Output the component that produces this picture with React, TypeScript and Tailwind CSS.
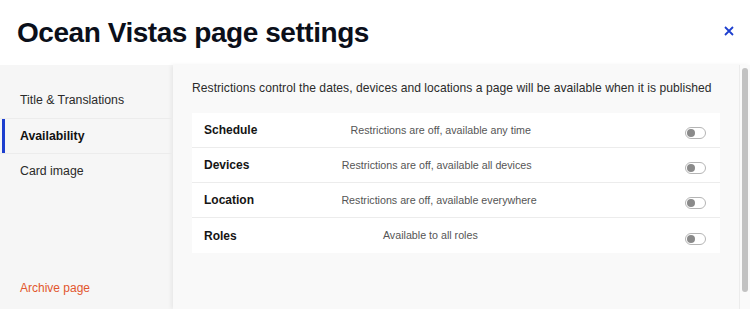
import React from 'react';

const rows = [
  { label: 'Schedule', desc: 'Restrictions are off, available any time' },
  { label: 'Devices', desc: 'Restrictions are off, available all devices' },
  { label: 'Location', desc: 'Restrictions are off, available everywhere' },
  { label: 'Roles', desc: 'Available to all roles' },
];

const Toggle: React.FC = () => (
  <div className="w-[21px] h-[12px] rounded-full border border-[#b5b5b5] bg-white flex items-center px-[1px] mt-[6px]">
    <div className="w-[8px] h-[8px] rounded-full bg-[#8a8a8a]"></div>
  </div>
);

const App: React.FC = () => {
  return (
    <div className="w-[750px] h-[309px] flex flex-col bg-white overflow-hidden font-['Liberation_Sans',Arial,sans-serif] text-[#1a1a1a]">
      {/* Header */}
      <div className="h-[65px] flex items-center justify-between pl-[17px] pr-[15px] shrink-0">
        <h1 className="text-[28px] font-bold tracking-[-0.45px] text-[#0b0f1a] leading-none mt-[1px]">
          Ocean Vistas page settings
        </h1>
        <button className="text-[#1d3fcf] w-[12px] h-[12px] flex items-center justify-center mb-[3px]">
          <svg width="10" height="10" viewBox="0 0 10 10" fill="none" stroke="currentColor" strokeWidth="1.8">
            <path d="M1 1L9 9M9 1L1 9" />
          </svg>
        </button>
      </div>

      {/* Body */}
      <div className="flex flex-1 min-h-0">
        {/* Sidebar */}
        <div className="w-[173px] shrink-0 bg-[#f6f6f6] flex flex-col pt-[18px] pb-[12px]">
          <div className="h-[35px] flex items-center pl-[20px] text-[12.3px] text-[#2a2a2a]">Title &amp; Translations</div>
          <div className="h-[36px] flex items-center pl-[20px] text-[12.3px] font-bold text-[#111] border-y border-[#ececec] relative">
            <span className="absolute left-[2px] top-0 bottom-0 w-[3px] bg-[#1d3fcf]"></span>
            Availability
          </div>
          <div className="h-[35px] flex items-center pl-[20px] text-[12.3px] text-[#2a2a2a]">Card image</div>
          <div className="mt-auto pl-[20px] text-[12px] text-[#e2572e]">Archive page</div>
        </div>

        {/* Main */}
        <div className="flex-1 bg-[#f9f9f9] shadow-[-2px_0_4px_rgba(0,0,0,0.06)] flex">
          <div className="flex-1 pl-[19px] pr-[19px] pt-[15px]">
            <p className="text-[12.1px] tracking-[0.04px] text-[#2b2b2b] leading-[16px] mb-[17px] whitespace-nowrap">
              Restrictions control the dates, devices and locations a page will be available when it is published
            </p>
            <div className="bg-white">
              {rows.map((r, i) => (
                <div
                  key={r.label}
                  className={`h-[35px] flex items-center justify-between pl-[12px] pr-[14px] ${i < rows.length - 1 ? 'border-b border-[#ececec]' : ''}`}
                >
                  <div className="text-[12px] font-bold text-[#151515]">{r.label}</div>
                  <div className="text-[10.7px] text-[#555]">{r.desc}</div>
                  <div className="w-[82px] flex justify-end">
                    <Toggle />
                  </div>
                </div>
              ))}
            </div>
          </div>
          {/* Scrollbar */}
          <div className="w-[11px] shrink-0 border-l border-[#ececec] bg-[#fafafa] pt-[3px] pl-[2px]">
            <div className="w-[6px] h-[224px] rounded-full bg-[#c2c2c2]"></div>
          </div>
        </div>
      </div>
    </div>
  );
};

export default App;
